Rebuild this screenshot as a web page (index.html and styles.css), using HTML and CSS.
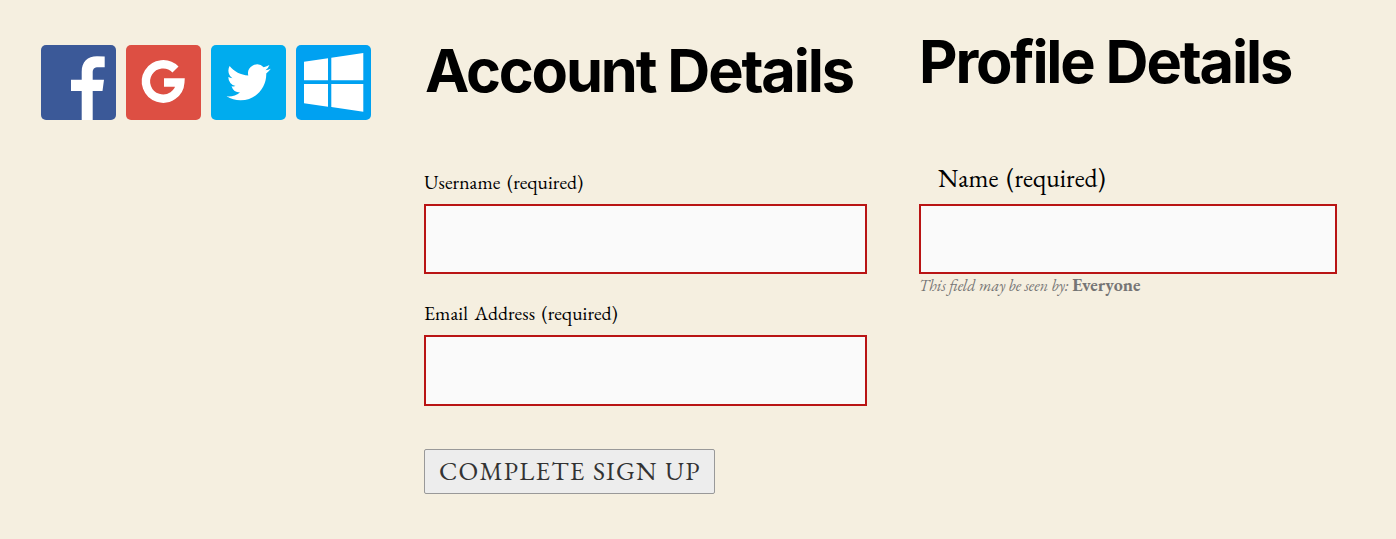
FILE: index.html
```html
<!DOCTYPE html>
<html lang="en">
<head>
<meta charset="utf-8">
<title>Sign Up</title>
<link rel="stylesheet" href="styles.css">
</head>
<body>
<form class="signup">
  <nav class="social" aria-label="Social sign up">
    <a class="tile facebook" aria-label="Facebook"><svg viewBox="0 0 75 75"><path d="M40.7 75V46H30V34.7H40.7V27C40.7 16.5 46.5 11.2 56 11.2Q60 11.2 63.7 11.6V22.3H57.5C53 22.3 51.7 24 51.7 28V34.7H63L61.5 46H51.7V75Z"/></svg></a>
    <a class="tile google" aria-label="Google"><svg viewBox="0 0 75 75"><path class="stroke" d="M49.5 24.5A17.2 17.2 0 1 0 54.3 37.5H38"/></svg></a>
    <a class="tile twitter" aria-label="Twitter"><svg viewBox="0 0 75 75"><path transform="translate(15.6 15.3) scale(1.84)" d="M23.953 4.57a10 10 0 01-2.825.775 4.958 4.958 0 002.163-2.723c-.951.555-2.005.959-3.127 1.184a4.92 4.92 0 00-8.384 4.482C7.69 8.095 4.067 6.13 1.64 3.162a4.822 4.822 0 00-.666 2.475c0 1.71.87 3.213 2.188 4.096a4.904 4.904 0 01-2.228-.616v.06a4.923 4.923 0 003.946 4.827 4.996 4.996 0 01-2.212.085 4.936 4.936 0 004.604 3.417 9.867 9.867 0 01-6.102 2.105c-.39 0-.779-.023-1.17-.067a13.995 13.995 0 007.557 2.209c9.053 0 13.998-7.496 13.998-13.985 0-.21 0-.42-.015-.63A9.935 9.935 0 0024 4.59z"/></svg></a>
    <a class="tile windows" aria-label="Windows"><svg viewBox="0 0 75 75"><path d="M8 16.7L32 13.3V35.3H8ZM35.3 12.7L67.3 8V35.3H35.3ZM8 39H32V61.7L8 58.3ZM35.3 39H67.3V66.7L35.3 62Z"/></svg></a>
  </nav>
  <section class="account">
    <h2 class="title">Account Details</h2>
    <label class="label" for="username">Username (required)</label>
    <input class="field" id="username" type="text">
    <label class="label label-email" for="email">Email Address (required)</label>
    <input class="field field-email" id="email" type="email">
    <button class="submit" type="button">COMPLETE SIGN UP</button>
  </section>
  <section class="profile">
    <h2 class="title">Profile Details</h2>
    <label class="label label-name" for="name">Name (required)</label>
    <input class="field" id="name" type="text">
    <p class="visibility"><em>This field may be seen by:</em> <strong>Everyone</strong></p>
  </section>
</form>
</body>
</html>
```
FILE: styles.css
```css
* { box-sizing: border-box; }
body {
  margin: 0;
  min-height: 539px;
  background: #f5efe0;
  color: #000;
  font-family: "EB Garamond", Garamond, "Liberation Serif", serif;
}
.signup { display: flex; align-items: flex-start; padding-left: 41px; }
.social { display: flex; gap: 10px; padding-top: 45px; width: 383px; }
.tile { width: 75px; height: 75px; border-radius: 5px; overflow: hidden; }
.tile svg { display: block; width: 75px; height: 75px; fill: #fff; }
.tile .stroke { fill: none; stroke: #fff; stroke-width: 8.4; }
.facebook { background: #3b5998; }
.google { background: #dd4f43; }
.twitter { background: #00acee; }
.windows { background: #00a1f1; }
.account { width: 443px; padding-top: 40px; }
.profile { width: 418px; margin-left: 52px; padding-top: 31px; }
.title {
  margin: 0 0 67px;
  font: 700 59.5px/60px Inter, sans-serif;
  letter-spacing: -2.15px;
  white-space: nowrap;
}
.account .title { padding-left: 1px; }
.profile .title { margin-bottom: 72px; }
.label { display: block; margin-bottom: 7px; font-size: 19.6px; line-height: 30px; letter-spacing: 0.06px; word-spacing: 2.5px; }
.label-email { margin-top: 24px; }
.label-name { margin-bottom: 11px; padding-left: 19px; font-size: 25.6px; }
.field {
  display: block;
  width: 100%;
  height: 70px;
  padding: 0 16px;
  border: 2px solid #b91414;
  border-radius: 0;
  background: #fafafa;
  font: inherit;
}
.field-email { height: 71px; }
.submit {
  display: block;
  width: 291px;
  height: 45px;
  margin-top: 43px;
  padding: 0 0 0 14px;
  border: 1px solid #999;
  border-radius: 2px;
  background: #ededed;
  color: #333;
  font: 25.8px/43px "EB Garamond", Garamond, "Liberation Serif", serif;
  letter-spacing: 1.2px;
  word-spacing: 1px;
  text-align: left;
  white-space: nowrap;
}
.visibility { margin: 1px 0 0; color: #757575; font-size: 18px; line-height: 20px; white-space: nowrap; }
.visibility em { font-size: 16px; }
```
